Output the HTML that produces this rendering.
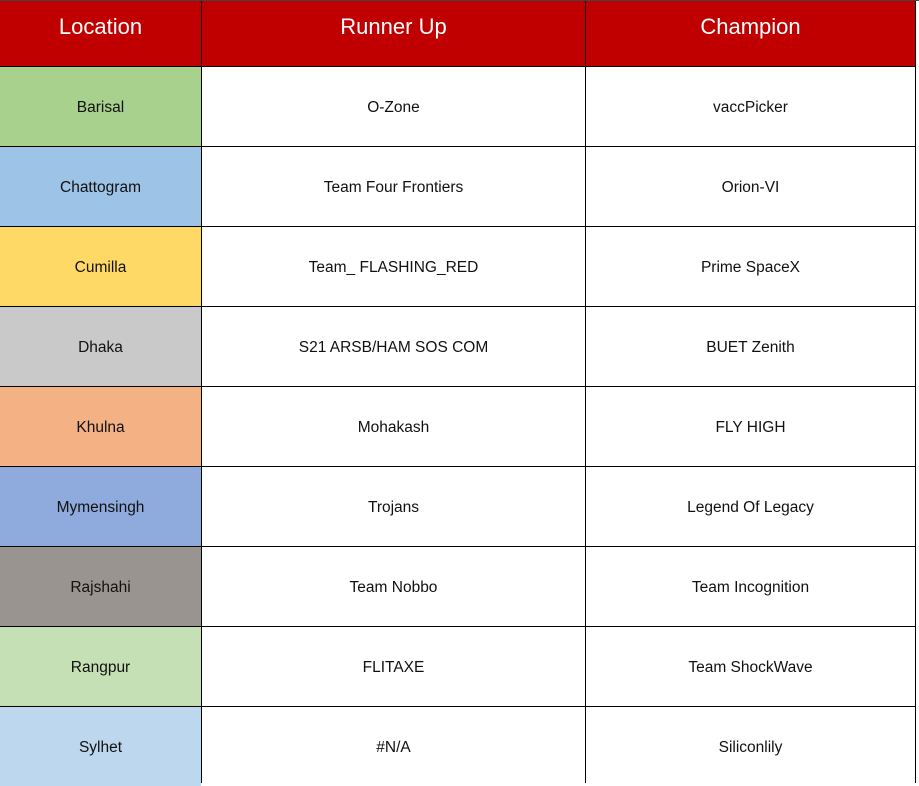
<!DOCTYPE html>
<html><head><meta charset="utf-8"><style>
body{margin:0;width:919px;height:783px;overflow:hidden;background:#fff;font-family:"Liberation Sans",sans-serif;position:relative}
.c{position:absolute;display:flex;align-items:center;justify-content:center;box-sizing:border-box;color:#111;font-size:15.5px;padding-top:3px}
.h{background:#c00000;color:#fff;font-size:22px;align-items:flex-start;padding-top:13px}
.l{position:absolute;background:#000}
</style></head><body>
<div style="position:absolute;left:0;top:0;width:919px;height:1px;background:#444"></div>
<div class="c h" style="left:0;top:1px;width:201px;height:65px">Location</div>
<div class="c h" style="left:202px;top:1px;width:383px;height:65px">Runner Up</div>
<div class="c h" style="left:586px;top:1px;width:329px;height:65px">Champion</div>
<div id="rows"></div>
<script>
var d=[["Barisal","#a9d18e","O-Zone","vaccPicker"],["Chattogram","#9dc3e6","Team Four Frontiers","Orion-VI"],["Cumilla","#ffd966","Team_ FLASHING_RED","Prime SpaceX"],["Dhaka","#c9c9c9","S21 ARSB/HAM SOS COM","BUET Zenith"],["Khulna","#f4b183","Mohakash","FLY HIGH"],["Mymensingh","#8faadc","Trojans","Legend Of Legacy"],["Rajshahi","#9a9490","Team Nobbo","Team Incognition"],["Rangpur","#c5e0b4","FLITAXE","Team ShockWave"],["Sylhet","#bdd7ee","#N/A","Siliconlily"]];
var h="";
d.forEach(function(r,i){var t=67+i*80;
h+='<div class="c" style="left:0;top:'+t+'px;width:201px;height:79px;background:'+r[1]+'">'+r[0]+'</div>';
h+='<div class="c" style="left:202px;top:'+t+'px;width:383px;height:79px">'+r[2]+'</div>';
h+='<div class="c" style="left:586px;top:'+t+'px;width:329px;height:79px">'+r[3]+'</div>';
h+='<div class="l" style="left:0;top:'+(t-1)+'px;width:916px;height:1px"></div>';});
h+='<div class="l" style="left:201px;top:1px;width:1px;height:782px"></div>';
h+='<div class="l" style="left:585px;top:1px;width:1px;height:782px"></div>';
h+='<div class="l" style="left:915px;top:1px;width:1px;height:782px"></div>';
document.getElementById("rows").innerHTML=h;
</script>
</body></html>
